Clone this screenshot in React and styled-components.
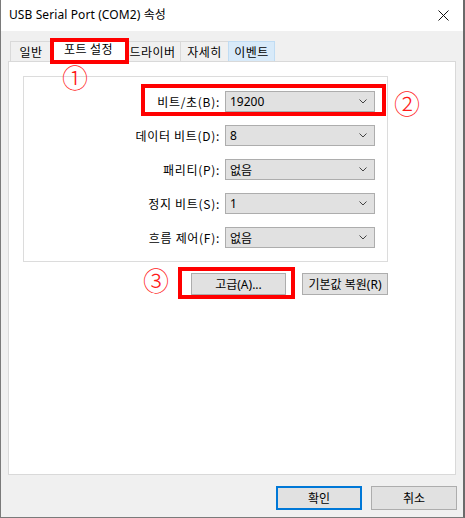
import React from "react";
import styled, { createGlobalStyle, css } from "styled-components";

const GlobalStyle = createGlobalStyle`
  html, body { margin: 0; padding: 0; background: #ffffff; }
  * { box-sizing: border-box; }
  body {
    font-family: "Noto Sans", "Noto Sans CJK KR", sans-serif;
    font-size: 12px;
    color: #000;
  }
`;

const Window = styled.div`
  position: relative;
  width: 465px;
  height: 518px;
  display: flex;
  flex-direction: column;
  background: #f0f0f0;
  border-left: 1px solid #7a7a7a;
  border-right: 2px solid #6a6a6a;
  border-bottom: 1px solid #7a7a7a;
`;

const TitleBar = styled.div`
  height: 31px;
  flex: none;
  background: #ffffff;
  display: flex;
  align-items: center;
  justify-content: space-between;
  padding: 0 8px 1px 8px;
`;

const Title = styled.span`
  font-size: 12px;
  line-height: 16px;
  letter-spacing: 0.1px;
`;

const CloseButton = styled.div`
  width: 22px;
  height: 22px;
  display: flex;
  align-items: center;
  justify-content: center;
  margin-right: 1px;
`;

const Body = styled.div`
  flex: 1;
  display: flex;
  flex-direction: column;
  padding: 8px 7px 7px 7px;
`;

const TabStrip = styled.div`
  display: flex;
  align-items: flex-end;
  height: 22px;
  padding-left: 2px;
  position: relative;
  z-index: 1;
`;

const Tab = styled.div`
  width: ${(p) => p.$w}px;
  height: 20px;
  display: flex;
  align-items: center;
  justify-content: center;
  font-family: "Noto Sans CJK KR", sans-serif;
  font-size: 12px;
  line-height: 14px;
  letter-spacing: 0.4px;
  background: #f0f0f0;
  border: 1px solid #d9d9d9;
  border-bottom: none;
  margin-left: -1px;
  &:first-child { margin-left: 0; }
  ${(p) =>
    p.$hover &&
    css`
      background: #d8eaf9;
      border-color: #c0dcf3;
    `}
  ${(p) =>
    p.$active &&
    css`
      position: relative;
      z-index: 2;
      height: 24px;
      margin: 0 -2px -1px -2px;
      width: ${p.$w + 4}px;
      background: #ffffff;
      align-items: flex-start;
      padding-top: 3px;
      &:first-child { margin-left: -2px; }
    `}
`;

const Panel = styled.div`
  height: 414px;
  flex: none;
  background: #ffffff;
  border: 1px solid #d9d9d9;
  padding: 14px 0 0 14px;
  display: flex;
  flex-direction: column;
`;

const GroupBox = styled.div`
  width: 365px;
  height: 186px;
  border: 1px solid #dcdcdc;
  padding: 14px 12px 13px 12px;
  display: grid;
  grid-template-columns: 1fr 150px;
  column-gap: 5px;
  row-gap: 13px;
  align-content: start;
`;

const FieldLabel = styled.label`
  height: 21px;
  display: flex;
  align-items: center;
  justify-content: flex-end;
  font-family: "Noto Sans CJK KR", sans-serif;
  font-size: 12px;
  letter-spacing: 0.7px;
  white-space: nowrap;
`;

const Combo = styled.div`
  height: 21px;
  display: flex;
  align-items: center;
  justify-content: space-between;
  background: #e1e1e1;
  border: 1px solid #adadad;
  padding: 0 7px 0 4px;
  font-family: "Noto Sans", "Noto Sans CJK KR", sans-serif;
  font-size: 12px;
`;

const ButtonRow = styled.div`
  width: 365px;
  display: flex;
  justify-content: flex-end;
  gap: 16px;
  margin-top: 11px;
`;

const Button = styled.button`
  width: ${(p) => p.$w}px;
  height: ${(p) => p.$h}px;
  padding: 0;
  margin: 0;
  background: #e1e1e1;
  border: 1px solid #adadad;
  font-family: "Noto Sans", "Noto Sans CJK KR", sans-serif;
  font-size: 12px;
  color: #000;
  display: flex;
  align-items: center;
  justify-content: center;
  ${(p) =>
    p.$default &&
    css`
      border: 2px solid #0078d7;
    `}
`;

const DialogButtons = styled.div`
  display: flex;
  justify-content: flex-end;
  gap: 9px;
  margin-top: 11px;
  margin-right: -1px;
`;

const Mark = styled.div`
  position: absolute;
  left: ${(p) => p.$x}px;
  top: ${(p) => p.$y}px;
  width: ${(p) => p.$w}px;
  height: ${(p) => p.$h}px;
  border: 4px solid #ff0000;
  pointer-events: none;
  z-index: 5;
`;

const Num = styled.div`
  position: absolute;
  left: ${(p) => p.$x}px;
  top: ${(p) => p.$y}px;
  transform: translate(-50%, -50%);
  color: #ff1a1a;
  font-family: "Noto Sans CJK KR", sans-serif;
  font-weight: 300;
  font-size: 26px;
  line-height: 1;
  z-index: 5;
`;

const Chevron = () => (
  <svg width="8" height="5" viewBox="0 0 8 5">
    <polyline points="0.5,0.5 4,4 7.5,0.5" fill="none" stroke="#444" strokeWidth="1" />
  </svg>
);

const CloseIcon = () => (
  <svg width="11" height="11" viewBox="0 0 11 11">
    <path d="M0.5 0.5 L10.5 10.5 M10.5 0.5 L0.5 10.5" stroke="#111" strokeWidth="1" />
  </svg>
);

const tabs = [
  { label: "일반", w: 42 },
  { label: "포트 설정", w: 73, active: true },
  { label: "드라이버", w: 57 },
  { label: "자세히", w: 49 },
  { label: "이벤트", w: 47, hover: true },
];

const fields = [
  { label: "비트/초(B):", value: "19200" },
  { label: "데이터 비트(D):", value: "8" },
  { label: "패리티(P):", value: "없음" },
  { label: "정지 비트(S):", value: "1" },
  { label: "흐름 제어(F):", value: "없음" },
];

export default function App() {
  return (
    <>
      <GlobalStyle />
      <Window>
        <TitleBar>
          <Title>USB Serial Port (COM2) 속성</Title>
          <CloseButton>
            <CloseIcon />
          </CloseButton>
        </TitleBar>
        <Body>
          <TabStrip>
            {tabs.map((t) => (
              <Tab key={t.label} $w={t.w} $active={t.active} $hover={t.hover}>
                {t.label}
              </Tab>
            ))}
          </TabStrip>
          <Panel>
            <GroupBox>
              {fields.map((f) => (
                <React.Fragment key={f.label}>
                  <FieldLabel>{f.label}</FieldLabel>
                  <Combo>
                    <span>{f.value}</span>
                    <Chevron />
                  </Combo>
                </React.Fragment>
              ))}
            </GroupBox>
            <ButtonRow>
              <Button $w={95} $h={22}>고급(A)...</Button>
              <Button $w={86} $h={22}>기본값 복원(R)</Button>
            </ButtonRow>
          </Panel>
          <DialogButtons>
            <Button $w={86} $h={24} $default>확인</Button>
            <Button $w={86} $h={24}>취소</Button>
          </DialogButtons>
        </Body>

        <Mark $x={49} $y={38} $w={79} $h={26} />
        <Mark $x={140} $y={84} $w={245} $h={32} />
        <Mark $x={177} $y={267} $w={117} $h={32} />
        <Num $x={74} $y={77}>①</Num>
        <Num $x={406} $y={103}>②</Num>
        <Num $x={155} $y={280}>③</Num>
      </Window>
    </>
  );
}
